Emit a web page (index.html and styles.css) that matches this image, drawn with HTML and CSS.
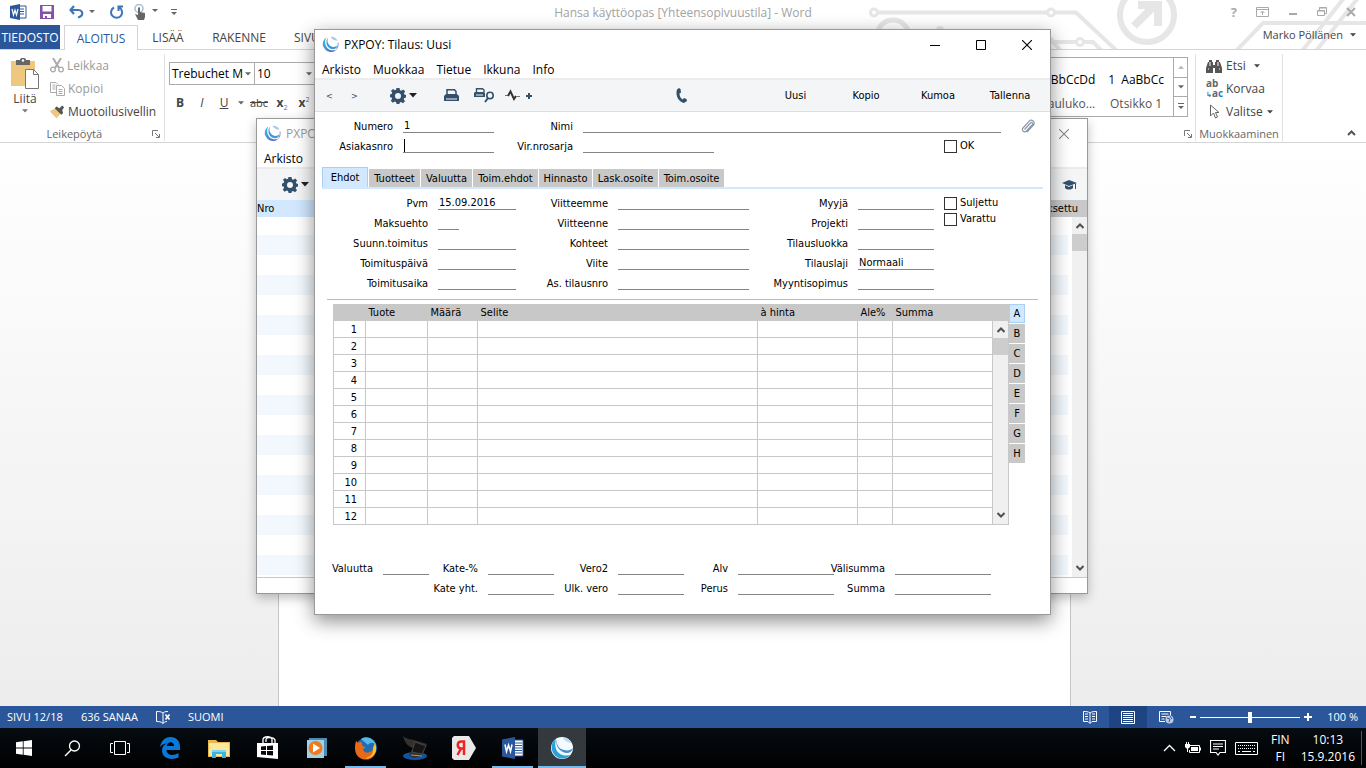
FILE: index.html
```html
<!DOCTYPE html>
<html lang="fi">
<head>
<meta charset="utf-8">
<title>Hansa käyttöopas [Yhteensopivuustila] - Word</title>
<link rel="stylesheet" href="styles.css">
</head>
<body>
<svg class="defs" width="0" height="0" aria-hidden="true">
  <defs>
    <linearGradient id="swirl" x1="0" y1="0" x2="1" y2="1"><stop offset="0" stop-color="#2fc0ea"/><stop offset="1" stop-color="#6a5fb5"/></linearGradient>
    <symbol id="logo" viewBox="0 0 18 18">
      <path d="M4.500 1.500C1 4 0 8 1.500 11.500 3 15 6.500 17.500 10.500 17c2-.3 3.500-1 4.500-2.200C11 16 6.500 14.500 4.500 11 2.800 8 3 4.500 4.500 1.500z" fill="url(#swirl)"/>
      <path d="M6.500 1.500C5 5 6 8.500 9 10.500c2.500 1.600 5 1.300 7.500-.5-.5 2.300-2.500 4-5 4-3.500 0-6.500-3-6.800-6.500C4.500 5 5 3 6.500 1.500z" fill="#3c9ad6"/>
      <path d="M9 1c3-.5 6 1 7.500 4C14 5 11 4 9 1z" fill="#a9c8e8"/>
      <path d="M17 7c.5 3-.5 6-2 7.500" fill="none" stroke="#8f86c8" stroke-width="1"/>
    </symbol>
    <symbol id="gear" viewBox="0 0 16 16">
      <path fill="#34506b" fill-rule="evenodd" d="M6.500 0h3l.5 2.200 1.300.6L13.300 1.500l1.800 1.900-1.200 1.900.5 1.300L16 7v2.600l-1.700.4-.6 1.300 1.300 2-2 1.900-1.900-1.200-1.300.5-.4 1.500H6.600L6 13.900l-1.300-.5-2 1.300-1.900-2 1.300-1.900-.5-1.200L0 9.200V6.600L1.600 6l.6-1.300-1.200-2L3 1l1.800 1.200L6 1.800zM8 5a3 3 0 1 0 0 6 3 3 0 0 0 0-6z"/>
    </symbol>
    <symbol id="tri" viewBox="0 0 8 5"><path d="M0 0h8L4 4.500z" fill="currentColor"/></symbol>
    <symbol id="x" viewBox="0 0 10 10"><path d="M0 0l10 10M10 0L0 10" stroke="currentColor" stroke-width="1.100"/></symbol>
    <symbol id="up" viewBox="0 0 8 6"><path d="M.5 5L4 1.500 7.500 5" fill="none" stroke="#505050" stroke-width="2"/></symbol>
    <symbol id="down" viewBox="0 0 8 6"><path d="M.5 1L4 4.500 7.500 1" fill="none" stroke="#505050" stroke-width="2"/></symbol>
    <symbol id="launch" viewBox="0 0 8 8"><path d="M.5 6V.5H6M3 3l4 4M7.500 4v3.500H4" fill="none" stroke="#777"/></symbol>
  </defs>
</svg>

<div class="desktop">
  <div class="word">
    <svg class="circuit" width="506" height="49" viewBox="860 0 506 49" fill="none" stroke="#e6e6e6" stroke-width="4" aria-hidden="true">
      <circle cx="874" cy="12.500" r="3.500" stroke-width="3"/><path d="M878 12.500h169M1055 12.500h21L1117 51"/>
      <circle cx="1051" cy="12.500" r="3.500" stroke-width="3"/><circle cx="1080" cy="42" r="3.500" stroke-width="3"/>
      <path d="M1040 42h36M1084 42h9l9 9M1050 38l10 12"/>
      <circle cx="893" cy="36" r="16" stroke-width="5"/><circle cx="940" cy="30" r="4" fill="#e6e6e6" stroke="none"/>
      <circle cx="1147" cy="15" r="27" stroke-width="6"/><path d="M1134 26l22-22M1138 5h20v21" stroke-width="8"/>
      <path d="M1236 51l27-28h103M1302 51l42-53M1316 51l42-53"/>
    </svg>
    <header class="titlebar">
      <div class="quick">
        <svg width="17" height="16" viewBox="0 0 17 16"><path d="M9 2h7v12H9" fill="#fff" stroke="#2b579a"/><path d="M10 5h4M10 7.500h4M10 10h4" stroke="#2b579a"/><path d="M0 2l10-2v16L0 14z" fill="#2b579a"/><path d="M2 5l1.500 6L5 6l1.500 5L8 5" stroke="#fff" stroke-width="1.200" fill="none"/></svg>
        <svg width="14" height="14" viewBox="0 0 14 14"><path d="M0 0h14v14H0z" fill="#8452a8"/><path d="M2.500 1h9v5.500h-9z" fill="#fff"/><path d="M3 9h8v4H7v-2H5v2H3z" fill="#fff"/></svg>
        <svg class="undo" width="26" height="14" viewBox="0 0 26 14"><path d="M5 1L1.500 5 5 9M2 5h7c4 0 5 3 4 5-.7 1.500-2 2-4 2.500" fill="none" stroke="#3d76b8" stroke-width="2.200"/><path d="M20 5h6l-3 3z" fill="#666"/></svg>
        <svg width="14" height="14" viewBox="0 0 14 14"><path d="M4 2.500a5.500 5.500 0 1 0 5.500.2M8.500 6V1.500H13" fill="none" stroke="#3d76b8" stroke-width="2"/></svg>
        <svg class="touch" width="24" height="16" viewBox="0 0 24 16"><circle cx="5" cy="4.500" r="4" fill="none" stroke="#a8bdd2" stroke-width="1.500"/><path d="M4 3.500h2V8l5 1v4l-1 3H4L1 10l3 1z" fill="#666"/><path d="M18 5h6l-3 3z" fill="#666"/></svg>
        <svg width="6" height="8" viewBox="0 0 6 8"><path d="M0 1.500h6" stroke="#666"/><path d="M0 4h6L3 7z" fill="#666"/></svg>
      </div>
      <h1>Hansa käyttöopas [Yhteensopivuustila] - Word</h1>
      <div class="syscmds">
        <span class="q">?</span>
        <svg width="13" height="10" viewBox="0 0 13 10"><path d="M.5.500h12v9H.5zM.5 2.500h12M6.500 8V4.500M4.500 6l2-2 2 2" fill="none" stroke="#aaa"/></svg>
        <svg width="10" height="10" viewBox="0 0 10 10"><path d="M1 7h8" stroke="#aaa" stroke-width="2"/></svg>
        <svg width="10" height="10" viewBox="0 0 10 10"><path d="M2.500 3V.5h7v6H8M.5 3.500h7v5h-7z" fill="none" stroke="#aaa"/><path d="M0 4h8M2 1h8" stroke="#aaa"/></svg>
        <svg width="10" height="10" viewBox="0 0 10 10"><path d="M1 1l8 8M9 1L1 9" stroke="#aaa" stroke-width="2"/></svg>
      </div>
    </header>
    <nav class="tabs">
      <button class="file">TIEDOSTO</button>
      <button class="on">ALOITUS</button>
      <button class="t3">LISÄÄ</button>
      <button class="t4">RAKENNE</button>
      <button class="t5">SIVU</button>
      <a class="user" href="#">Marko Pöllänen <svg width="6" height="4"><use href="#tri"/></svg></a>
    </nav>
    <section class="ribbon">
      <div class="group clip">
        <div class="cols">
          <button class="paste">
            <svg width="28" height="31" viewBox="0 0 28 31"><path d="M0 3h24v25H0z" fill="#edc87e"/><path d="M5 7V2h4c0-3 6-3 6 0h4v5z" fill="#666"/><circle cx="12" cy="2.500" r="1.200" fill="#fff"/><path d="M14.500 11.500h8l5 5v14h-13z" fill="#fff" stroke="#777"/><path d="M22.500 11.500v5h5" fill="none" stroke="#777"/></svg>
            Liitä
            <svg width="6" height="4" class="dim"><use href="#tri"/></svg>
          </button>
          <div class="cmds">
            <button class="off"><svg width="14" height="15" viewBox="0 0 14 15"><path d="M3 0l6 10M11 0L5 10" stroke="#aaa" stroke-width="2"/><circle cx="3" cy="11.500" r="2.300" fill="none" stroke="#aaa" stroke-width="1.300"/><circle cx="11" cy="11.500" r="2.300" fill="none" stroke="#aaa" stroke-width="1.300"/></svg>Leikkaa</button>
            <button class="off"><svg width="15" height="14" viewBox="0 0 15 14"><path d="M6 10.500H.5V.5H6l2 2M2.500 3h3M2.500 5h3M2.500 7h3M6.500 3.500h5l3 3v7h-8zM8.500 7.500h4M8.500 9.500h4M8.500 11.500h4" fill="none" stroke="#aaa"/></svg>Kopioi</button>
            <button><svg width="15" height="14" viewBox="0 0 16 14"><path d="M0 6l6-3 6 5-5 6C5 11 2 10 0 6z" fill="#edc87e"/><path d="M5 3l2-2 3 2 3-3 2 2-2 3 1 3-2 2z" fill="#555"/></svg>Muotoilusivellin</button>
          </div>
        </div>
        <div class="caption">Leikepöytä<svg width="8" height="8"><use href="#launch"/></svg></div>
      </div>
      <div class="group font">
        <div class="combos">
          <button class="combo name"><span>Trebuchet M</span><svg width="6" height="4"><use href="#tri"/></svg></button>
          <button class="combo size"><span>10</span><svg width="6" height="4"><use href="#tri"/></svg></button>
        </div>
        <div class="fmt">
          <button><b>B</b></button><button><i>I</i></button><button><u>U</u></button><button class="car"><svg width="6" height="4"><use href="#tri"/></svg></button><button class="strike"><s>abc</s></button><button><b>x</b><sub>2</sub></button><button><b>x</b><sup>2</sup></button>
        </div>
      </div>
      <div class="group styles">
        <div class="gallery">
          <button class="sty s1"><span>BbCcDd</span><small>auluko...</small></button>
          <button class="sty s2"><span>1&nbsp; AaBbCc</span><small>Otsikko 1</small></button>
          <div class="gbtns">
            <button class="lite" aria-label="Edellinen"><svg width="6" height="4" class="flip"><use href="#tri"/></svg></button>
            <button aria-label="Seuraava"><svg width="6" height="4"><use href="#tri"/></svg></button>
            <button aria-label="Lisää"><svg width="6" height="7" viewBox="0 0 6 7"><path d="M0 .5h6" stroke="#666"/><path d="M0 3h6L3 6z" fill="#666"/></svg></button>
          </div>
        </div>
        <div class="caption"><svg width="8" height="8"><use href="#launch"/></svg></div>
      </div>
      <div class="group edit">
        <div class="cmds">
          <button><svg width="16" height="14" viewBox="0 0 16 14"><path d="M3 1h3v2h1v3h2V3h1V1h3v2h1l2 6v5H9V9H7v5H0V9l2-6h1z" fill="#555"/><path d="M2 10h1M13 10h1M4 3v4M12 3v4" stroke="#fff"/></svg>Etsi<svg class="gap" width="6" height="4"><use href="#tri"/></svg></button>
          <button><span class="ab"><span>ab</span><span><em>↳</em>a<em>c</em></span></span>Korvaa</button>
          <button><svg class="ptr" width="16" height="15" viewBox="0 0 16 15"><path d="M4.500 1v11l3-3 2 5 2-1-2-4.500H13z" fill="#fff" stroke="#666"/></svg>Valitse<svg width="6" height="4"><use href="#tri"/></svg></button>
        </div>
        <div class="caption">Muokkaaminen</div>
      </div>
      <button class="collapse" aria-label="Kutista valintanauha"><svg width="9" height="6" viewBox="0 0 9 6"><path d="M1 5l3.500-3.500L8 5" fill="none" stroke="#555" stroke-width="2"/></svg></button>
    </section>
    <main class="doc"><div class="page"></div></main>
    <footer class="status">
      <span class="sp">SIVU 12/18</span><span class="sw">636 SANAA</span>
      <svg width="15" height="13" viewBox="0 0 15 13"><path d="M7 2C5 .5 3 .5.5.500v10c2.500 0 4.500 0 6.500 2V2c1-1 2-1.500 5-1.500M7 12.500c1-1 2-2 4-2" fill="none" stroke="#fff"/><path d="M9.500 3.500l4 5M13.500 3.500l-4 5" stroke="#fff" stroke-width="1.600"/></svg>
      <span class="sl">SUOMI</span>
      <div class="views">
        <button aria-label="Lukutila"><svg width="14" height="13" viewBox="0 0 14 13"><path d="M7 2C5 .5 3 .5.5.500v10H5l2 2 2-2h4.500V.5C11 .5 9 .5 7 2zv10M2 3h3M2 5.500h3M2 8h3M9 3h3M9 5.500h3M9 8h3" fill="none" stroke="#fff"/></svg></button>
        <button class="cur" aria-label="Tulostusasettelu"><svg width="14" height="13" viewBox="0 0 14 13"><path d="M.5.500h13v12H.5zM2 2.500h10M2 4.500h10M2 6.500h10M2 8.500h10M2 10.500h10" fill="none" stroke="#fff"/></svg></button>
        <button aria-label="Verkkoasettelu"><svg width="15" height="13" viewBox="0 0 15 13"><path d="M6 10.500H.5V.5h11v4M2.500 3h7M2.500 5.500h5M2.500 8h3" fill="none" stroke="#fff"/><circle cx="10.500" cy="8.500" r="4" fill="#b9cbe6"/><path d="M8 7l3 1-1 3M11 5l2 3" stroke="#2b579a" fill="none"/></svg></button>
      </div>
      <button class="zm" aria-label="Loitonna"><svg width="6" height="8" viewBox="0 0 6 8"><path d="M0 4h6" stroke="#fff" stroke-width="2"/></svg></button>
      <input type="range" min="0" max="100" value="50" aria-label="Zoomaus">
      <button class="zp" aria-label="Lähennä"><svg width="8" height="8" viewBox="0 0 8 8"><path d="M0 4h8M4 0v8" stroke="#fff" stroke-width="2"/></svg></button>
      <span class="pct">100 %</span>
    </footer>
  </div>

  <section class="win back">
    <div class="wtitle"><svg width="17" height="17"><use href="#logo"/></svg><span>PXPO</span><button aria-label="Sulje"><svg width="10" height="10"><use href="#x"/></svg></button></div>
    <div class="wmenu"><button>Arkisto</button></div>
    <div class="wtools"><button class="gearbtn"><svg width="16" height="16"><use href="#gear"/></svg><svg width="8" height="5"><use href="#tri"/></svg></button>
      <svg class="cap" width="15" height="10" viewBox="0 0 15 10"><path d="M0 3l7-3 8 3-8 3z" fill="#34506b"/><path d="M3 5l4 2 4-2v3c-2 2-6 2-8 0z" fill="#34506b"/><path d="M13.500 3.500V9" stroke="#34506b"/></svg></div>
    <div class="lhead"><span>Nro</span><span class="r">Maksettu</span></div>
    <div class="lbody"><div class="stripes"></div>
      <div class="scroll"><svg width="8" height="6"><use href="#up"/></svg><div class="thumb"></div><svg width="8" height="6"><use href="#down"/></svg></div></div>
    <div class="lfoot"></div>
  </section>

  <section class="win front">
    <div class="wtitle"><svg width="17" height="17"><use href="#logo"/></svg><span>PXPOY: Tilaus: Uusi</span>
      <button aria-label="Pienennä"><svg width="10" height="10" viewBox="0 0 10 10"><path d="M0 5.500h10" stroke="#000"/></svg></button>
      <button aria-label="Suurenna"><svg width="10" height="10" viewBox="0 0 10 10"><path d="M.5.500h9v9h-9z" fill="none" stroke="#000"/></svg></button>
      <button aria-label="Sulje"><svg width="10" height="10"><use href="#x"/></svg></button></div>
    <div class="wmenu"><button>Arkisto</button><button>Muokkaa</button><button>Tietue</button><button>Ikkuna</button><button>Info</button></div>
    <div class="wtools">
      <button class="arr">&lt;</button><button class="arr">&gt;</button>
      <button class="gearbtn"><svg width="16" height="16"><use href="#gear"/></svg><svg width="8" height="5"><use href="#tri"/></svg></button>
      <button class="print" aria-label="Tulosta"><svg width="15" height="13" viewBox="0 0 15 13"><path d="M3 6V.8h7.500L12 2.500V6" fill="none" stroke="#34506b" stroke-width="1.500"/><path d="M0 7l2-2h11l2 2v5H0z" fill="#34506b"/><path d="M2 10h11" stroke="#f4f5f7"/></svg></button>
      <button class="prev" aria-label="Esikatselu"><svg width="20" height="15" viewBox="0 0 20 15"><path d="M2.500 4V.8h6L10 2v2" fill="none" stroke="#34506b" stroke-width="1.400"/><path d="M0 5l1-1h9l1 1v4H0z" fill="#34506b"/><path d="M2 7h7" stroke="#f4f5f7"/><circle cx="16" cy="7.500" r="3.200" fill="none" stroke="#34506b" stroke-width="1.600"/><path d="M14 10l-3 4" stroke="#34506b" stroke-width="2"/></svg></button>
      <button class="act" aria-label="Toiminto"><svg width="27" height="13" viewBox="0 0 27 13"><path d="M0 6.500h3.500" stroke="#777"/><path d="M3 7l2.500-4.500L9 10l2-3" fill="none" stroke="#333" stroke-width="2"/><path d="M11 7.500h4" stroke="#777"/><path d="M21 7h6M24 4v6" stroke="#34506b" stroke-width="2"/></svg></button>
      <button class="phone" aria-label="Soita"><svg width="11" height="15" viewBox="0 0 11 15"><path d="M3 0L1 1.500C-1 8 3 14 8 15l3-2-.5-2L8 10l-1.500 1.500C4.500 10 3.500 8 3.500 5.500L5 4.500 4.500 1z" fill="#34506b"/></svg></button>
      <button class="txt">Uusi</button><button class="txt">Kopio</button><button class="txt">Kumoa</button><button class="txt last">Tallenna</button>
    </div>
    <form class="form">
      <div class="top">
        <label for="f1">Numero</label><input id="f1" value="1">
        <label for="f2">Nimi</label><input id="f2" class="wide">
        <svg class="pin" width="14" height="15" viewBox="0 0 14 15"><path d="M3.500 10.500l6-6.500c1.200-1.300 3 .3 1.800 1.700L5.500 12c-2 2.300-5.500-.8-3.500-3l6-6.700C10.500-.5 15 3 12.500 6L6 13.200" fill="none" stroke="#8c98a8" stroke-width="1.200"/></svg>
        <label for="f3">Asiakasnro</label><input id="f3" class="caret">
        <label for="f4">Vir.nrosarja</label><input id="f4">
        <label class="check"><input type="checkbox">OK</label>
      </div>
      <div class="ftabs"><button type="button" class="sel">Ehdot</button><button type="button" class="w51">Tuotteet</button><button type="button" class="w51">Valuutta</button><button type="button" class="w65">Toim.ehdot</button><button type="button" class="w53">Hinnasto</button><button type="button" class="w65">Lask.osoite</button><button type="button" class="w65">Toim.osoite</button></div>
      <div class="terms">
        <div class="mid">
          <label for="a1">Pvm</label><input id="a1" value="15.09.2016"><label for="b1">Viitteemme</label><input id="b1"><label for="c1">Myyjä</label><input id="c1">
          <label for="a2">Maksuehto</label><input id="a2" class="short"><label for="b2">Viitteenne</label><input id="b2"><label for="c2">Projekti</label><input id="c2">
          <label for="a3">Suunn.toimitus</label><input id="a3"><label for="b3">Kohteet</label><input id="b3"><label for="c3">Tilausluokka</label><input id="c3">
          <label for="a4">Toimituspäivä</label><input id="a4"><label for="b4">Viite</label><input id="b4"><label for="c4">Tilauslaji</label><input id="c4" value="Normaali">
          <label for="a5">Toimitusaika</label><input id="a5"><label for="b5">As. tilausnro</label><input id="b5"><label for="c5">Myyntisopimus</label><input id="c5">
        </div>
        <div class="checks"><label class="check"><input type="checkbox">Suljettu</label><label class="check"><input type="checkbox">Varattu</label></div>
      </div>
      <div class="rows">
        <div class="matrix">
          <table>
            <colgroup><col class="c0"><col class="c1"><col class="c2"><col><col class="c4"><col class="c5"><col class="c6"></colgroup>
            <thead><tr><th></th><th>Tuote</th><th>Määrä</th><th>Selite</th><th>à hinta</th><th>Ale%</th><th>Summa</th></tr></thead>
            <tbody>
              <tr><td>1</td><td></td><td></td><td></td><td></td><td></td><td></td></tr>
              <tr><td>2</td><td></td><td></td><td></td><td></td><td></td><td></td></tr>
              <tr><td>3</td><td></td><td></td><td></td><td></td><td></td><td></td></tr>
              <tr><td>4</td><td></td><td></td><td></td><td></td><td></td><td></td></tr>
              <tr><td>5</td><td></td><td></td><td></td><td></td><td></td><td></td></tr>
              <tr><td>6</td><td></td><td></td><td></td><td></td><td></td><td></td></tr>
              <tr><td>7</td><td></td><td></td><td></td><td></td><td></td><td></td></tr>
              <tr><td>8</td><td></td><td></td><td></td><td></td><td></td><td></td></tr>
              <tr><td>9</td><td></td><td></td><td></td><td></td><td></td><td></td></tr>
              <tr><td>10</td><td></td><td></td><td></td><td></td><td></td><td></td></tr>
              <tr><td>11</td><td></td><td></td><td></td><td></td><td></td><td></td></tr>
              <tr><td>12</td><td></td><td></td><td></td><td></td><td></td><td></td></tr>
            </tbody>
          </table>
          <div class="scroll"><svg width="8" height="6"><use href="#up"/></svg><div class="thumb"></div><svg width="8" height="6"><use href="#down"/></svg></div>
        </div>
        <div class="letters"><button type="button" class="sel">A</button><button type="button">B</button><button type="button">C</button><button type="button">D</button><button type="button">E</button><button type="button">F</button><button type="button">G</button><button type="button">H</button></div>
      </div>
      <div class="sum">
        <label for="s1">Valuutta</label><input id="s1"><label for="s2">Kate-%</label><input id="s2"><label for="s3">Vero2</label><input id="s3"><label for="s4">Alv</label><input id="s4"><label for="s5">Välisumma</label><input id="s5">
        <label for="s6" class="second">Kate yht.</label><input id="s6"><label for="s7">Ulk. vero</label><input id="s7"><label for="s8">Perus</label><input id="s8"><label for="s9">Summa</label><input id="s9">
      </div>
    </form>
  </section>
</div>

<div class="taskbar">
  <button class="n" aria-label="Käynnistä"><svg width="16" height="16" viewBox="0 0 16 16"><path d="M0 2.300L6.800 1.300V7.600H0zM7.600 1.200L16 0v7.600H7.600zM0 8.400h6.800v6.300L0 13.700zM7.600 8.400H16V16l-8.400-1.200z" fill="#fff"/></svg></button>
  <button class="n" aria-label="Etsi"><svg width="17" height="17" viewBox="0 0 17 17"><circle cx="10.500" cy="6" r="5" fill="none" stroke="#fff" stroke-width="1.300"/><path d="M7 10l-6 6" stroke="#fff" stroke-width="1.500"/></svg></button>
  <button class="n" aria-label="Tehtävänäkymä"><svg width="20" height="14" viewBox="0 0 20 14"><path d="M4.500.500h11v13h-11zM3 2.500H.5v9H3M17 2.500h2.500v9H17" fill="none" stroke="#fff"/></svg></button>
  <button class="first" aria-label="Edge"><svg width="20" height="22" viewBox="0 0 20 22"><path d="M0 10C1 4 5 0 10.500 0 17 0 20 5 20 9.500V13H6.500c.3 6 7.500 6 12 3v4.500C12 23.500 2 22 2 13.500 2 10 4 7.500 7 6.500 4 6.500 1.500 8 0 10zM6.700 9H14c0-5-6.500-5-7.300 0z" fill="#0a78d6"/></svg></button>
  <button aria-label="Resurssienhallinta"><svg width="22" height="19" viewBox="0 0 22 19"><path d="M0 1h8l2 2h12v15H0z" fill="#e8b84c"/><path d="M1 4h20v13H1z" fill="#fce79b"/><path d="M4 19v-8h14v8h-4v-4H8v4z" fill="#35b5e8"/><path d="M4 11h14v2H4z" fill="#7ad4f5"/></svg></button>
  <button aria-label="Kauppa"><svg width="22" height="24" viewBox="0 0 22 24"><path d="M6 7V3c1-3 8-3 9 0v4M9 6V3c1-2 8-2 9 1v3" fill="none" stroke="#fff" stroke-width="1.300"/><path d="M0 7h21v16L0 21z" fill="#fff"/><path d="M4 10.500l5-.5v4H4zM10 10l6-.5V14h-6zM4 15h5v4l-5-.5zM10 15h6v4.500l-6-.5z" fill="#06090c"/></svg></button>
  <button aria-label="Mediasoitin"><svg width="20" height="20" viewBox="0 0 20 20"><path d="M2 0h18v18H2z" fill="#4d8bb0"/><path d="M0 2h17v18H0z" fill="#9ed1ec"/><circle cx="8.500" cy="10" r="7" fill="#ef7a1c"/><path d="M6 5.500l7 4.500-7 4.500z" fill="#fff"/></svg></button>
  <button class="run" aria-label="Firefox"><svg width="22" height="23" viewBox="0 0 22 23"><circle cx="11.500" cy="11" r="10.500" fill="#1f6db4"/><path d="M6 2c5-4 13-1 15 6-3-3-6-3-8 0C11 6 8 4 6 2z" fill="#59b8e6"/><path d="M1 4l2 1.500 3.500-.5 1 4 3 1-2.500 2.500c1 4 6 4 9 1 2-2 2-5 1.500-7 5 5 2 16-7.500 16S-2 14 1 4z" fill="#e96a16"/><path d="M20 6c4 9-3 16-10 15.500C16 20 19 16 18 11z" fill="#fbc52e"/></svg></button>
  <button aria-label="Skanneri"><svg width="24" height="24" viewBox="0 0 24 24"><ellipse cx="12" cy="20" rx="12" ry="4" fill="#0f55a0"/><path d="M0 0c5 4 8 3 11 4l13 4-5 12-9 2-4-3 4-7C6 11 2 8 0 0z" fill="#33302f"/><path d="M12 6l11 4-4 8-10-2z" fill="#151515" stroke="#666" stroke-width=".5"/><path d="M8 19l11 1" stroke="#9a9a9a"/></svg></button>
  <button aria-label="Yandex"><svg width="24" height="24" viewBox="0 0 24 24"><path d="M0 2l2-2h15l7 12-7 12H2l-2-2z" fill="#e9e9e9"/><path d="M12 19V5.500H9.500c-5 0-5 7 0 7H12M9 12.500L5.500 19" fill="none" stroke="#ee2424" stroke-width="2.500"/></svg></button>
  <button class="run" aria-label="Word"><svg width="22" height="22" viewBox="0 0 22 22"><path d="M12 3h9v16h-9z" fill="#fff" stroke="#2b579a"/><path d="M13 6h7M13 8.500h7M13 11h7M13 13.500h7M13 16h7" stroke="#2b579a"/><path d="M0 2.500L13 0v22L0 19.500z" fill="#2b579a"/><path d="M3 7.500l1.500 7L6.500 8l2 6.500 1.500-7" fill="none" stroke="#fff" stroke-width="1.500"/></svg></button>
  <button class="run cur" aria-label="Hansa"><svg width="22" height="22" viewBox="0 0 22 22"><circle cx="11" cy="11" r="11" fill="#f4fafd"/><path d="M5 2C-1 5-1 16 6 20c5 3 11 1 13-2-4 1-11 1-14-6-1-3-1-7 0-10z" fill="#2aa0dc"/><path d="M6 2c-1 6 2 10 7 11 4 1 7 0 9-2-1 5-6 6-10 4C7 13 4 7 6 2z" fill="#3e8fd0"/><path d="M12 1c2 3 4 4 8 5-1-3-4-5-8-5z" fill="#b9d9ee"/></svg></button>
  <div class="tray">
    <svg width="13" height="8" viewBox="0 0 13 8"><path d="M1 7l5.500-5.500L12 7" fill="none" stroke="#fff" stroke-width="1.300"/></svg>
    <svg width="16" height="12" viewBox="0 0 16 12"><path d="M5 3.500h9.500v7H4.500V8" fill="none" stroke="#fff"/><path d="M6 5h7v4H6zM15 5.500h1v3h-1zM0 2h5v3L3.500 6.500h-2L0 5zM1 0h1v2H1zM3 0h1v2H3zM2 6h1v4H2z" fill="#fff"/></svg>
    <svg width="16" height="16" viewBox="0 0 16 16"><path d="M.5.500h15v12H10L8 15l-2-2.500H.5zM3 4h10M3 6.500h10M3 9h6" fill="none" stroke="#fff" stroke-width="1.200"/></svg>
    <svg width="23" height="13" viewBox="0 0 23 13"><path d="M.5.500h22v12H.5z" fill="none" stroke="#fff"/><path d="M3 3.500h17M3 6.500h17" stroke="#fff" stroke-dasharray="1 1"/><path d="M3 9.500h2M7 9.500h9M18 9.500h2" stroke="#fff"/></svg>
    <div class="lang">FIN<br>FI</div>
    <div class="clock">10:13<br>15.9.2016</div>
  </div>
</div>
</body>
</html>
```
FILE: styles.css
```css
:root {
  --ui: "Open Sans", "Noto Sans", sans-serif;
  --form: "DejaVu Sans Condensed", "DejaVu Sans", sans-serif;
  --blue: #2b579a;
  --grey: #c8c8c8;
  --pick: #d1e8ff;
}
* { box-sizing: border-box; }
body { margin: 0; height: 100vh; display: flex; flex-direction: column; overflow: hidden; font: 12px/16px var(--ui); color: #444; }
button { border: 0; padding: 0; margin: 0; background: none; font: inherit; color: inherit; white-space: nowrap; }
svg { flex: none; display: block; }
.defs { position: absolute; }
.desktop { flex: 1; position: relative; display: flex; min-height: 0; }
.word { flex: 1; display: flex; flex-direction: column; position: relative; min-width: 0; background: #fff; }
.circuit { position: absolute; top: 0; right: 0; }

.titlebar { height: 25px; display: flex; align-items: center; position: relative; }
.quick { flex: 1; display: flex; align-items: center; padding: 0 0 2px 10px; gap: 13px; }
.quick .undo { margin: 0 2px; }
.quick .touch { margin: 0 0 0 -3px; }
.titlebar h1 { margin: 0; font-size: 12px; font-weight: 400; color: #a3a3a3; }
.syscmds { flex: 1; display: flex; justify-content: flex-end; align-items: center; gap: 19px; padding: 0 10px 2px 0; color: #aaa; }
.syscmds .q { font-weight: 700; font-size: 13px; }

.tabs { height: 25px; display: flex; position: relative; border-bottom: 1px solid #d4d4d4; font-size: 12px; }
.tabs button { padding-top: 1px; }
.tabs .file { width: 60px; background: var(--blue); color: #fff; }
.tabs .on { width: 74px; margin: 0 0 -1px 4px; border: 1px solid #d4d4d4; border-bottom: 0; background: #fff; color: var(--blue); }
.tabs .t3 { width: 60px; }
.tabs .t4 { width: 82px; }
.tabs .t5 { margin-left: 14px; }
.user { margin-left: auto; padding: 0 10px 4px 0; display: flex; align-items: center; gap: 7px; color: #444; text-decoration: none; font-size: 11px; }

.ribbon { height: 93px; display: flex; position: relative; border-bottom: 1px solid #d4d4d4; background: #fff; padding: 4px 0 1px; }
.group { display: flex; flex-direction: column; justify-content: space-between; border-right: 1px solid #e1e1e1; position: relative; }
.caption { display: flex; align-items: center; justify-content: flex-end; color: #666; font-size: 11px; line-height: 14px; }
.cols { display: flex; }
.clip { width: 165px; }
.clip .caption { gap: 50px; padding-right: 4px; }
.paste { width: 50px; display: flex; flex-direction: column; align-items: center; gap: 2px; padding-top: 4px; }
.cmds button { display: flex; align-items: center; gap: 4px; height: 23px; }
.clip .cmds button { gap: 3px; }
.cmds .off { color: #9a9a9a; }
.dim { color: #777; }
.font { flex: 1; border: 0; justify-content: flex-start; padding: 8px 0 0 4px; }
.combos { display: flex; }
.combo { height: 23px; border: 1px solid #ababab; display: flex; align-items: center; justify-content: space-between; padding: 0 3px 0 2px; color: #000; }
.combo svg, .fmt svg, .gbtns svg { color: #666; }
.combo.name { width: 86px; }
.combo.size { width: 62px; margin-left: -1px; }
.fmt { display: flex; align-items: center; height: 36px; }
.fmt button { width: 22px; font-size: 12px; }
.fmt .car { display: flex; justify-content: center; width: 12px; }
.fmt .strike { width: 24px; font-size: 11px; }
.fmt sub, .fmt sup { font-size: 7px; color: #2b7cd3; line-height: 0; }
.styles { width: 160px; padding: 3px 7px 0 0; }
.styles .caption { margin-right: -4px; padding-bottom: 3px; }
.gallery { height: 60px; border: 1px solid #ababab; display: flex; justify-content: flex-end; color: #000; }
.sty { display: flex; flex-direction: column; justify-content: flex-end; gap: 8px; align-items: center; padding-bottom: 4px; }
.sty small { font-size: 12px; color: #555; }
.s1 { align-items: flex-end; }
.s2 { margin: 0 9px 0 13px; }
.gbtns { width: 14px; display: flex; flex-direction: column; border-left: 1px solid #ababab; flex: none; }
.gbtns button { flex: 1; display: flex; align-items: center; justify-content: center; }
.gbtns button + button { border-top: 1px solid #ababab; }
.gbtns .lite svg { color: #bbb; }
.flip { transform: rotate(180deg); }
.edit { width: 87px; }
.edit .caption { justify-content: center; }
.edit .cmds { padding-left: 10px; }
.gap { margin-left: 4px; }
.ab { width: 16px; display: flex; flex-direction: column; font: 700 10px/10px var(--ui); text-align: left; color: #666; }
.ab em { color: #2b7cd3; font-style: normal; }
.ab em:first-of-type { font-size: 7px; }
.collapse { width: 83px; display: flex; align-items: flex-end; justify-content: flex-end; padding: 0 10px 5px 0; }

.doc { flex: 1; display: flex; justify-content: center; padding-right: 17px; background: linear-gradient(#fff, #ededed); }
.page { width: 793px; background: #fff; border: 1px solid #c6c6c6; border-width: 0 1px; }

.status { height: 22px; background: var(--blue); color: #fff; display: flex; align-items: center; font-size: 11px; padding: 0 8px 0 7px; }
.sp { width: 74px; }
.sw { width: 75px; }
.sl { margin-left: 17px; }
.views { margin-left: auto; display: flex; align-self: stretch; margin-right: 5px; }
.views button { width: 38px; display: flex; align-items: center; justify-content: center; }
.views .cur { background: #1e4482; }
.status input { appearance: none; width: 100px; height: 11px; margin: 0 4px; background: linear-gradient(#fff, #fff) 0 5px / 100% 1px no-repeat; }
.status input::-webkit-slider-thumb { appearance: none; width: 4px; height: 11px; background: #fff; }
.pct { padding-left: 15px; }

.win { position: absolute; background: #fff; border: 1px solid #999; color: #000; display: flex; flex-direction: column; }
.back { left: 256px; right: 278px; top: 118px; height: 476px; box-shadow: 0 4px 10px rgba(0, 0, 0, .25); }
.front { left: 314px; right: 315px; top: 29px; box-shadow: 0 6px 18px rgba(0, 0, 0, .45); }
.wtitle { height: 29px; display: flex; align-items: center; padding-left: 7px; }
.wtitle span { margin: 0 auto 0 5px; }
.back .wtitle span { color: #999; }
.wtitle button { width: 46px; display: flex; justify-content: center; }
.back .wtitle button { color: #888; }
.wmenu { height: 19px; display: flex; align-items: center; gap: 12px; padding: 3px 7px 0; }
.wtools { height: 34px; display: flex; align-items: center; background: #f4f5f7; border-top: 2px solid #ececec; border-bottom: 1px solid #dcdee0; font: 11px/14px var(--form); }
.back .wtools { height: 33px; border-bottom: 0; }
.gearbtn { display: flex; align-items: center; gap: 3px; color: #222; }
.back .gearbtn { margin-left: 25px; }
.cap { margin: 0 10px 0 auto; }
.arr { width: 25px; color: #34506b; padding-left: 4px; font-size: 9px; }
.front .gearbtn { margin-left: 25px; }
.print { margin-left: 27px; }
.prev { margin-left: 15px; }
.act { margin-left: 11px; }
.phone { margin: 0 69px 0 auto; }
.txt { width: 57px; margin-left: 12px; text-align: center; }
.phone + .txt { margin-left: 11px; }
.txt + .txt { width: 60px; }
.txt.last { margin-right: 10px; }

.lhead { height: 17px; display: flex; justify-content: space-between; background: var(--grey); font: 11px/17px var(--form); }
.lhead span { background: var(--pick); flex: 1; }
.lhead .r { flex: none; background: none; padding-right: 9px; }
.lbody { flex: 1; display: flex; justify-content: space-between; }
.stripes { flex: 1; margin-right: 4px; background: repeating-linear-gradient(#fff 0 20px, #f2f8fd 20px 40px) 0 -2px; }
.scroll { width: 15px; background: #f0f0f0; display: flex; flex-direction: column; align-items: center; padding: 6px 0; }
.scroll .thumb { width: 100%; height: 17px; background: #cdcdcd; margin: 5px 0 auto; }
.lfoot { height: 16px; border-top: 1px solid #c8c8c8; }

.form { font: 11px/14px var(--form); padding-bottom: 16px; }
.form input:not([type]) { width: 100%; height: 14px; padding: 1px 0 0 1px; border: 0; border-bottom: 1px solid #848484; background: none; font: inherit; outline: 0; border-radius: 0; }
.form label { text-align: right; white-space: nowrap; padding-top: 2px; }
.top, .mid, .sum { display: grid; grid-auto-rows: 20px; align-items: center; column-gap: 10px; }
.top { grid-template-columns: 78px 91px 69px 131px 1fr 57px 39px; padding-top: 4px; }
.top .wide { grid-column: 4 / 7; }
.pin { margin-left: 10px; }
.form .top .check { grid-column: 6 / 8; }
.form input.caret:not([type]) { background: linear-gradient(#000, #000) 1px 0 / 1px 100% no-repeat; }
.form .check { display: flex; align-items: center; gap: 3px; text-align: left; padding: 0; }
.check input { appearance: none; width: 13px; height: 13px; margin: 0; border: 1px solid #333; background: #fff; }
.ftabs { display: flex; align-items: flex-end; gap: 1px; margin: 11px 7px 0; border-bottom: 2px solid var(--pick); }
.ftabs button { height: 18px; padding-top: 2px; background: var(--grey); }
.ftabs .sel { width: 46px; height: 20px; padding: 0; background: var(--pick); border: 1px solid #a6d0f5; border-bottom: 0; }
.ftabs .w51 { width: 51px; }
.ftabs .w53 { width: 53px; }
.ftabs .w65 { width: 65px; }
.terms { display: flex; gap: 10px; margin-right: 12px; padding: 4px 0 6px; }
.mid { grid-template-columns: 113px 78px 82px 131px 89px 76px; }
.form .mid .short { width: 21px; }
.checks { padding-top: 3px; display: grid; gap: 2px; align-content: start; }
.rows { display: flex; margin: 0 12px; padding: 4px 13px 0 6px; border-top: 1px solid #bbb; align-items: flex-start; }
.matrix { flex: 1; display: flex; background: var(--grey); border-right: 1px solid var(--grey); }
.matrix table { flex: 1; border-collapse: collapse; table-layout: fixed; width: 100%; }
.matrix th { height: 16px; padding: 1px 0 0 3px; font-weight: 400; text-align: left; line-height: 15px; }
.matrix td { height: 17px; padding: 2px 0 0; background: #fff; border: 1px solid var(--grey); }
.matrix td:first-child { text-align: right; padding-right: 8px; }
.c0 { width: 32px; }
.c1 { width: 62px; }
.c2 { width: 50px; }
.c4 { width: 100px; }
.c5 { width: 35px; }
.c6 { width: 100px; }
.matrix .scroll { margin: 17px 0 1px; }
.letters { display: grid; gap: 1px; }
.letters button { width: 16px; height: 19px; background: var(--grey); }
.letters .sel { background: var(--pick); border: 1px solid #a6d0f5; }
.sum { grid-template-columns: 58px 46px 39px 66px 44px 66px 34px 96px minmax(0, 1fr) 96px; margin: 33px 59px 0 0; }
.form .sum label { display: flex; justify-content: flex-end; }
.sum .second { grid-column: 3; }

.taskbar { height: 40px; flex: none; display: flex; background: linear-gradient(#060c11, #000); color: #fff; }
.taskbar button { width: 49px; display: flex; align-items: center; justify-content: center; border: 0 solid #76b9ed; }
.taskbar .n { width: 48px; }
.taskbar .first { margin-left: 1px; }
.taskbar .run { border-bottom-width: 2px; width: 41px; margin: 0 4px; padding-top: 2px; }
.taskbar .cur { width: 48px; margin: 0 0 0 1px; background: #34393d; }
.tray { margin-left: auto; display: flex; align-items: center; gap: 9px; padding-right: 4px; }
.tray .lang, .tray .clock { text-align: center; line-height: 17px; }
.lang { margin-left: 4px; }
.clock { margin-left: 2px; padding-right: 6px; border-right: 1px solid #555; }
```
